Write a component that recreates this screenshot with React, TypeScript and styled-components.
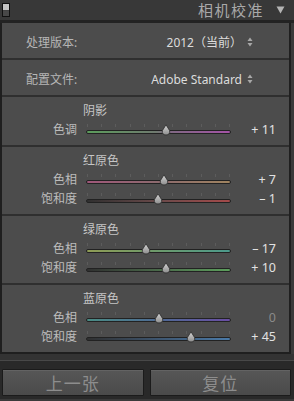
import styled, { createGlobalStyle } from "styled-components";

const GlobalStyle = createGlobalStyle`
  html, body {
    margin: 0;
    padding: 0;
    background: #2e2e2e;
  }
  body {
    font-family: "Noto Sans", "Noto Sans CJK SC", sans-serif;
  }
`;

const Screen = styled.div`
  width: 294px;
  height: 401px;
  background: #3a3a3a;
  display: flex;
  flex-direction: column;
  overflow: hidden;
`;

const Header = styled.div`
  height: 20px;
  display: flex;
  align-items: center;
  padding: 0 9px 0 2px;
  background: #383838;
  border-bottom: 3px solid #232323;
`;
const Title = styled.div`
  margin-left: auto;
  font-family: "Noto Sans CJK SC", sans-serif;
  font-size: 15px;
  letter-spacing: 1.5px;
  color: #a9a9a9;
  line-height: 20px;
`;
const Collapse = styled.svg`
  margin-left: 12px;
`;

const Panel = styled.div`
  margin-right: 3px;
  background: #4c4c4c;
  border-left: 2px solid #1f1f1f;
  border-right: 2px solid #1f1f1f;
  border-bottom: 2px solid #1f1f1f;
`;

const PopupRow = styled.div`
  height: 35px;
  display: flex;
  align-items: center;
  justify-content: space-between;
  padding: 0 36px 0 24px;
  border-bottom: 2px solid #2f2f2f;
`;
const PopupLabel = styled.div`
  font-size: 12px;
  color: #b6b6b6;
  padding-top: 3px;
`;
const PopupValue = styled.div`
  display: flex;
  align-items: center;
  gap: 5px;
  font-size: 12px;
  color: #dcdcdc;
  padding-top: 3px;
`;

const Section = styled.div<{ $last?: boolean }>`
  padding: 5px 13px 6px 0;
  border-bottom: ${(p) => (p.$last ? "none" : "2px solid #2f2f2f")};
`;
const SectionTitle = styled.div`
  padding-left: 81px;
  height: 18px;
  line-height: 18px;
  font-size: 12px;
  color: #c6c6c6;
`;

const SliderRow = styled.div`
  display: grid;
  grid-template-columns: 75px 145px 1fr;
  column-gap: 9px;
  align-items: center;
  height: 19px;
`;
const SliderLabel = styled.div`
  text-align: right;
  font-size: 12px;
  color: #bcbcbc;
  line-height: 19px;
`;
const Track = styled.div`
  position: relative;
  height: 19px;
  display: flex;
  flex-direction: column;
  padding-top: 4px;
  box-sizing: border-box;
`;
const Ticks = styled.div`
  display: flex;
  justify-content: space-between;
  height: 3px;
  padding: 0 1px;
`;
const Tick = styled.span`
  width: 1px;
  height: 3px;
  background: #5c5c5c;
`;
const Bar = styled.div<{ $colors: string }>`
  margin-top: 3px;
  height: 4px;
  border-radius: 2px;
  box-sizing: border-box;
  border: 1px solid #222;
  background: linear-gradient(to right, ${(p) => p.$colors});
`;
const Thumb = styled.svg`
  position: absolute;
  top: 4px;
  transform: translateX(-50%);
`;
const SliderValue = styled.div<{ $dim?: boolean }>`
  text-align: right;
  font-size: 12.5px;
  color: ${(p) => (p.$dim ? "#8a8a8a" : "#e2e2e2")};
  line-height: 19px;
`;

const Gutter = styled.div`
  height: 14px;
  background: linear-gradient(
    to bottom,
    #333 0,
    #333 6px,
    #484848 6px,
    #484848 7px,
    #292929 7px
  );
`;
const ButtonBar = styled.div`
  display: grid;
  grid-template-columns: 1fr 1fr;
  column-gap: 6px;
  padding: 1px 3px 3px 2px;
  background: #292929;
`;
const Button = styled.button`
  height: 27px;
  border: 1px solid #1b1b1b;
  border-radius: 1px;
  background: linear-gradient(to bottom, #575757, #4a4a4a);
  box-shadow: inset 0 1px 0 #636363;
  color: #8d8d8d;
  font-family: "Noto Sans CJK SC", sans-serif;
  font-size: 17px;
  letter-spacing: 1px;
  padding: 0;
`;

function Stepper() {
  return (
    <svg width="6" height="10" viewBox="0 0 6 10">
      <path d="M3 0.5 L5.5 4 L0.5 4 Z" fill="#a8a8a8" />
      <path d="M3 9.5 L5.5 6 L0.5 6 Z" fill="#a8a8a8" />
    </svg>
  );
}

interface SliderProps {
  label: string;
  value: number;
  colors: string;
}

function Slider({ label, value, colors }: SliderProps) {
  const pct = ((value + 100) / 200) * 100;
  const text =
    value > 0 ? `+ ${value}` : value < 0 ? `– ${Math.abs(value)}` : "0";
  return (
    <SliderRow>
      <SliderLabel>{label}</SliderLabel>
      <Track>
        <Ticks>
          {Array.from({ length: 11 }).map((_, i) => (
            <Tick key={i} />
          ))}
        </Ticks>
        <Bar $colors={colors} />
        <Thumb
          width="10"
          height="12"
          viewBox="0 0 10 12"
          style={{ left: `${pct}%` }}
        >
          <defs>
            <linearGradient id="thumbFill" x1="0" y1="0" x2="0" y2="1">
              <stop offset="0" stopColor="#d6d6d6" />
              <stop offset="1" stopColor="#8c8c8c" />
            </linearGradient>
          </defs>
          <path
            d="M5 0.8 L8.6 6.5 Q9.4 10.8 5 11 Q0.6 10.8 1.4 6.5 Z"
            fill="url(#thumbFill)"
            stroke="#2a2a2a"
            strokeWidth="0.8"
          />
        </Thumb>
      </Track>
      <SliderValue $dim={value === 0}>{text}</SliderValue>
    </SliderRow>
  );
}

const sections = [
  {
    title: "阴影",
    rows: [
      { label: "色调", value: 11, colors: "#5c9c5c, #6f7a6f 48%, #7d6a80 55%, #a453a6" },
    ],
  },
  {
    title: "红原色",
    rows: [
      { label: "色相", value: 7, colors: "#a0587a, #8c6a6e 50%, #a08460" },
      { label: "饱和度", value: -1, colors: "#303030, #6a4a4a 50%, #a44a4a" },
    ],
  },
  {
    title: "绿原色",
    rows: [
      { label: "色相", value: -17, colors: "#8f9c55, #6c9a6c 50%, #4c9a8c" },
      { label: "饱和度", value: 10, colors: "#303030, #4a6a4a 50%, #5c9e5c" },
    ],
  },
  {
    title: "蓝原色",
    rows: [
      { label: "色相", value: 0, colors: "#4a8c84, #4e6a94 50%, #6a4ea4" },
      { label: "饱和度", value: 45, colors: "#303030, #3e5670 50%, #4a7aa8" },
    ],
  },
];

export default function App() {
  return (
    <>
      <GlobalStyle />
      <Screen>
        <Header>
          <svg width="8" height="14" viewBox="0 0 8 14">
            <rect x="0.5" y="0.5" width="7" height="13" fill="#3c3c3c" stroke="#111" />
            <rect x="1" y="1" width="6" height="6" fill="#c4c4c4" />
            <rect x="1" y="7.5" width="6" height="5.5" fill="#484848" />
          </svg>
          <Title>相机校准</Title>
          <Collapse width="9" height="8" viewBox="0 0 9 8">
            <path d="M0.5 0.5 L8.5 0.5 L4.5 7.5 Z" fill="#b4b4b4" />
          </Collapse>
        </Header>
        <Panel>
          <PopupRow>
            <PopupLabel>处理版本:</PopupLabel>
            <PopupValue>
              2012（当前）
              <Stepper />
            </PopupValue>
          </PopupRow>
          <PopupRow>
            <PopupLabel>配置文件:</PopupLabel>
            <PopupValue>
              Adobe Standard
              <Stepper />
            </PopupValue>
          </PopupRow>
          {sections.map((s, i) => (
            <Section key={s.title} $last={i === sections.length - 1}>
              <SectionTitle>{s.title}</SectionTitle>
              {s.rows.map((r) => (
                <Slider key={r.label} {...r} />
              ))}
            </Section>
          ))}
        </Panel>
        <Gutter />
        <ButtonBar>
          <Button>上一张</Button>
          <Button>复位</Button>
        </ButtonBar>
      </Screen>
    </>
  );
}
